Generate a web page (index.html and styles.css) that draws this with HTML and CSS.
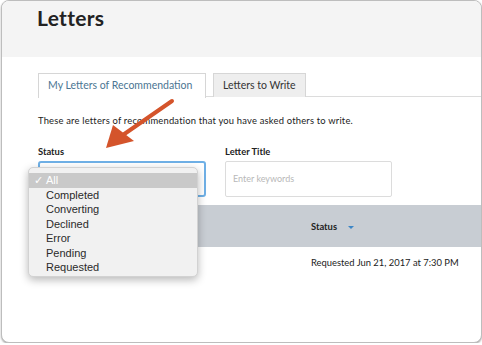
FILE: index.html
```html
<!DOCTYPE html>
<html lang="en">
<head>
	<meta charset="UTF-8">
	<title>Letters</title>
	<link rel="stylesheet" href="styles.css">
</head>
<body>
	<div class="frame">
		<div class="head">
			<h1 class="title">Letters</h1>
		</div>
		<div class="main">
			<div class="tabs">
				<div class="tab active">My Letters of Recommendation</div>
				<div class="tab">Letters to Write</div>
			</div>
			<p class="intro">These are letters of recommendation that you have asked others to write.</p>

			<div class="filters">
				<div class="field field-status">
					<label class="lbl">Status</label>
					<div class="select"></div>
				</div>
				<div class="field">
					<label class="lbl">Letter Title</label>
					<div class="ipt">Enter keywords</div>
				</div>
			</div>

			<div class="grid">
				<div class="grid-head">
					<div class="cell"></div>
					<div class="cell th">Status <span class="sort"></span></div>
				</div>
				<div class="grid-row">
					<div class="cell"></div>
					<div class="cell">Requested Jun 21, 2017 at 7:30 PM</div>
				</div>
			</div>
		</div>

		<!-- open dropdown of the status select -->
		<ul class="menu">
			<li class="on"><span class="check">✓</span>All</li>
			<li>Completed</li>
			<li>Converting</li>
			<li>Declined</li>
			<li>Error</li>
			<li>Pending</li>
			<li>Requested</li>
		</ul>

		<!-- annotation arrow -->
		<svg class="arrow" width="90" height="70" viewBox="0 0 90 70">
			<line x1="82" y1="4" x2="30" y2="40" stroke="#d4542b" stroke-width="4" stroke-linecap="round"/>
			<polygon points="16,51 23,28 44,44" fill="#d4542b"/>
		</svg>
	</div>
</body>
</html>
```

FILE: styles.css
```css
*{
	box-sizing: border-box;
	margin: 0;
	padding: 0;
}
body{
	background: #fff;
	font-family: Lato, "Open Sans", sans-serif;
	color: #222;
}
.frame{
	position: relative;
	width: 481px;
	height: 343px;
	margin-left: 1px;
	border: 1px solid #bdbdbd;
	border-radius: 8px;
	overflow: hidden;
	box-shadow: 0 1px 2px rgba(0,0,0,.35);
	background: #fff;
}
.head{
	height: 56px;
	background: #f4f4f4;
	padding: 4px 0 0 35px;
}
.title{
	font-size: 21px;
	font-weight: bold;
	color: #222;
	letter-spacing: 0.3px;
}
.main{
	padding: 16px 0 0 36px;
}
.tabs{
	display: flex;
	gap: 7px;
	height: 24px;
	border-bottom: 1px solid #dcdcdc;
}
.tab{
	height: 24px;
	padding: 0 9px;
	border: 1px solid #d6d6d6;
	border-bottom: none;
	background: #eeeeee;
	font-size: 10.5px;
	line-height: 23px;
	color: #333;
}
.tab.active{
	width: 168px;
	padding: 0 9px;
	background: #fff;
	color: #4b7592;
	height: 25px;
}
.intro{
	margin-top: 18px;
	font-size: 9.4px;
	letter-spacing: 0.2px;
	color: #222;
}
.filters{
	display: flex;
	gap: 19px;
	margin-top: 20px;
}
.field{
	display: flex;
	flex-direction: column;
}
.lbl{
	font-size: 9.4px;
	font-weight: bold;
	height: 15px;
}
.select{
	width: 168px;
	height: 36px;
	border: 2px solid #6fb0e6;
	border-radius: 3px;
	background: #fff;
}
.ipt{
	width: 167px;
	height: 36px;
	border: 1px solid #dcdcdc;
	border-radius: 2px;
	padding-left: 7px;
	font-size: 9px;
	line-height: 34px;
	color: #b8b8b8;
}
.grid{
	margin-top: 8px;
	font-size: 9.4px;
}
.grid-head,
.grid-row{
	display: grid;
	grid-template-columns: 273px 1fr;
	align-items: center;
}
.grid-head{
	height: 42px;
	background: #c8cdd3;
}
.grid-row{
	height: 30px;
}
.th{
	font-weight: bold;
}
.sort{
	display: inline-block;
	margin-left: 9px;
	width: 0;
	height: 0;
	border-left: 3.5px solid transparent;
	border-right: 3.5px solid transparent;
	border-top: 3.5px solid #3d86c6;
	vertical-align: middle;
}
.menu{
	position: absolute;
	left: 26px;
	top: 166px;
	width: 170px;
	padding: 5px 0 1px;
	list-style: none;
	background: #f1f1f1;
	border: 1px solid #d2d2d2;
	border-radius: 5px;
	box-shadow: 0 3px 8px rgba(0,0,0,.28);
	font-family: "Liberation Sans", Arial, sans-serif;
	font-size: 11px;
	color: #2a2a2a;
}
.menu li{
	height: 14.5px;
	line-height: 14.5px;
	padding-left: 17px;
}
.menu li.on{
	background: #c9c9c9;
	color: #fff;
	padding-left: 5px;
}
.check{
	display: inline-block;
	width: 12px;
}
.arrow{
	position: absolute;
	left: 88px;
	top: 96px;
}
```
